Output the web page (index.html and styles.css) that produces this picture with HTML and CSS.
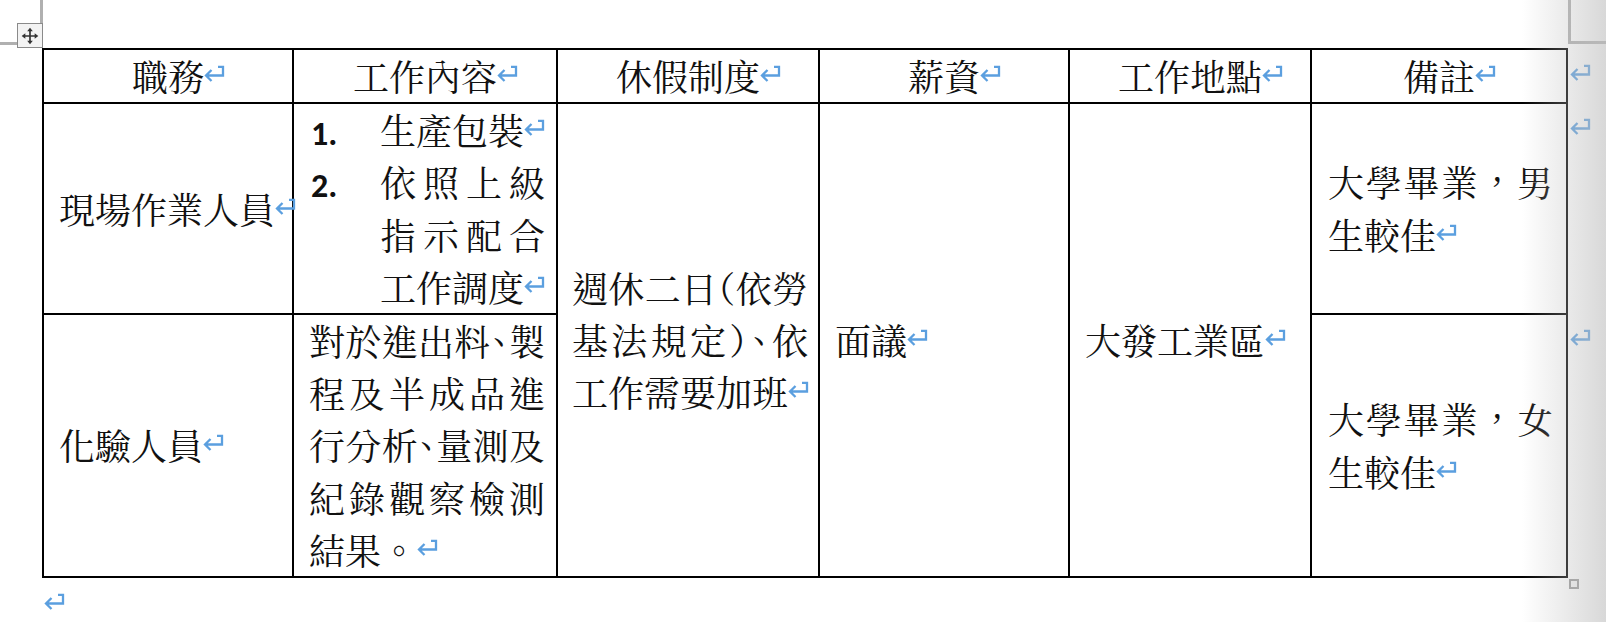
FILE: index.html
```html
<!DOCTYPE html>
<html lang="zh-Hant">
<head>
<meta charset="utf-8">
<title>職務表</title>
<link rel="stylesheet" href="styles.css">
</head>
<body>
<div class="page">
  <div class="crop crop-tl-v"></div>
  <div class="crop crop-tl-h"></div>
  <div class="crop crop-tr-v"></div>
  <div class="crop crop-tr-h"></div>
  <div class="move-handle">
    <svg viewBox="0 0 24 24" class="move-icon">
      <path d="M12 5V19M5 12H19" />
      <path class="head" d="M12 2L8.6 6.4H15.4ZM12 22L8.6 17.6H15.4ZM2 12L6.4 8.6V15.4ZM22 12L17.6 8.6V15.4Z" />
    </svg>
  </div>

  <table class="jobs">
    <colgroup>
      <col class="w1"><col class="w2"><col class="w3"><col class="w4"><col class="w5"><col class="w6"><col class="w7">
    </colgroup>
    <thead>
      <tr>
        <th class="cell">職務<svg class="pm" viewBox="0 0 21 17"><path d="M14 1.8H19V10.5H2M7.5 5L2 10.5L7.5 16"/></svg></th>
        <th class="cell">工作內容<svg class="pm" viewBox="0 0 21 17"><path d="M14 1.8H19V10.5H2M7.5 5L2 10.5L7.5 16"/></svg></th>
        <th class="cell">休假制度<svg class="pm" viewBox="0 0 21 17"><path d="M14 1.8H19V10.5H2M7.5 5L2 10.5L7.5 16"/></svg></th>
        <th class="cell">薪資<svg class="pm" viewBox="0 0 21 17"><path d="M14 1.8H19V10.5H2M7.5 5L2 10.5L7.5 16"/></svg></th>
        <th class="cell">工作地點<svg class="pm" viewBox="0 0 21 17"><path d="M14 1.8H19V10.5H2M7.5 5L2 10.5L7.5 16"/></svg></th>
        <th class="cell">備註<svg class="pm" viewBox="0 0 21 17"><path d="M14 1.8H19V10.5H2M7.5 5L2 10.5L7.5 16"/></svg></th>
        <td class="eor"><svg class="pm" viewBox="0 0 21 17"><path d="M14 1.8H19V10.5H2M7.5 5L2 10.5L7.5 16"/></svg></td>
      </tr>
    </thead>
    <tbody>
      <tr>
        <td class="cell">現場作業人員<svg class="pm" viewBox="0 0 21 17"><path d="M14 1.8H19V10.5H2M7.5 5L2 10.5L7.5 16"/></svg></td>
        <td class="cell">
          <div class="item"><span class="num">1.</span><span class="itext">生產包裝<svg class="pm" viewBox="0 0 21 17"><path d="M14 1.8H19V10.5H2M7.5 5L2 10.5L7.5 16"/></svg></span></div>
          <div class="item"><span class="num">2.</span><span class="itext">依照上級指示配合工作調度<svg class="pm" viewBox="0 0 21 17"><path d="M14 1.8H19V10.5H2M7.5 5L2 10.5L7.5 16"/></svg></span></div>
        </td>
        <td class="cell wide" rowspan="2">週休二日<span class="halt">（</span>依勞基法規定<span class="halt">）、</span>依工作需要加班<svg class="pm" viewBox="0 0 21 17"><path d="M14 1.8H19V10.5H2M7.5 5L2 10.5L7.5 16"/></svg></td>
        <td class="cell" rowspan="2">面議<svg class="pm" viewBox="0 0 21 17"><path d="M14 1.8H19V10.5H2M7.5 5L2 10.5L7.5 16"/></svg></td>
        <td class="cell" rowspan="2">大發工業區<svg class="pm" viewBox="0 0 21 17"><path d="M14 1.8H19V10.5H2M7.5 5L2 10.5L7.5 16"/></svg></td>
        <td class="cell note">大學畢業，男生較佳<svg class="pm" viewBox="0 0 21 17"><path d="M14 1.8H19V10.5H2M7.5 5L2 10.5L7.5 16"/></svg></td>
        <td class="eor"><svg class="pm" viewBox="0 0 21 17"><path d="M14 1.8H19V10.5H2M7.5 5L2 10.5L7.5 16"/></svg></td>
      </tr>
      <tr>
        <td class="cell">化驗人員<svg class="pm" viewBox="0 0 21 17"><path d="M14 1.8H19V10.5H2M7.5 5L2 10.5L7.5 16"/></svg></td>
        <td class="cell just">對於進出料<span class="halt">、</span>製程及半成品進行分析<span class="halt">、</span>量測及紀錄觀察檢測結果。<svg class="pm" viewBox="0 0 21 17"><path d="M14 1.8H19V10.5H2M7.5 5L2 10.5L7.5 16"/></svg></td>
        <td class="cell note">大學畢業，女生較佳<svg class="pm" viewBox="0 0 21 17"><path d="M14 1.8H19V10.5H2M7.5 5L2 10.5L7.5 16"/></svg></td>
        <td class="eor"><svg class="pm" viewBox="0 0 21 17"><path d="M14 1.8H19V10.5H2M7.5 5L2 10.5L7.5 16"/></svg></td>
      </tr>
    </tbody>
  </table>
  <p class="after"><svg class="pm" viewBox="0 0 21 17"><path d="M14 1.8H19V10.5H2M7.5 5L2 10.5L7.5 16"/></svg></p>

  <div class="resize-handle"></div>
  <div class="shade"></div>
</div>
</body>
</html>
```

FILE: styles.css
```css
* { box-sizing: border-box; }

html, body {
  margin: 0;
  padding: 0;
  background: #ffffff;
}

body {
  width: 1606px;
  height: 622px;
  overflow: hidden;
  font-family: "Noto Serif CJK TC", "Noto Sans CJK TC", sans-serif;
  font-size: 36px;
  color: #111111;
  text-spacing-trim: space-all;
}

.page {
  position: relative;
  width: 1606px;
  height: 622px;
  padding: 48px 0 0 42px;
}

/* page corner marks */
.crop {
  position: absolute;
  background: #b0b0b0;
}
.crop-tl-v { left: 40px; top: 0; width: 3px; height: 24px; }
.crop-tl-h { left: 0; top: 42px; width: 17px; height: 3px; }
.crop-tr-v { left: 1568px; top: 0; width: 3px; height: 44px; }
.crop-tr-h { left: 1568px; top: 41px; width: 38px; height: 3px; }

.move-handle {
  position: absolute;
  left: 17px;
  top: 23px;
  width: 26px;
  height: 25px;
  border: 1.5px solid #8a8a8a;
  background: #f3f3f3;
  display: flex;
  align-items: center;
  justify-content: center;
}
.move-icon {
  width: 20px;
  height: 20px;
  fill: none;
  stroke: #333333;
  stroke-width: 2;
}
.move-icon .head {
  fill: #333333;
  stroke: none;
}

/* table */
.jobs {
  border-collapse: collapse;
  table-layout: fixed;
  width: 1561px;
}
.w1 { width: 250px; }
.w2 { width: 264px; }
.w3 { width: 262px; }
.w4 { width: 250px; }
.w5 { width: 242px; }
.w6 { width: 256px; }
.w7 { width: 37px; }

.cell {
  border: 2px solid #000000;
  padding: 0 11px 0 15px;
  line-height: 52.2px;
  vertical-align: middle;
  text-align: left;
  font-weight: normal;
}
th.cell {
  text-align: center;
  padding: 0 13px;
}
.cell.wide {
  padding: 0 10px 0 14px;
  text-align: justify;
}
.cell.note {
  padding: 0 13px 0 16px;
  text-align: justify;
}
.cell.just { text-align: justify; }

.eor {
  border: none;
  padding: 0 0 0 2px;
  line-height: 52.2px;
  vertical-align: top;
}

.item {
  display: flex;
  align-items: baseline;
  line-height: 52.2px;
}
.num {
  flex: 0 0 71px;
  font-family: "Carlito", "Liberation Sans", sans-serif;
  font-weight: bold;
  font-size: 34px;
  line-height: 40px;
  padding-left: 2px;
}
.itext {
  flex: 1 1 auto;
  min-width: 0;
  text-align: justify;
}

.halt { font-feature-settings: "halt" 1; }

/* paragraph marks */
.pm {
  display: inline-block;
  width: 21px;
  height: 17px;
  margin-right: -21px;
  vertical-align: 9px;
  fill: none;
  stroke: #5b9fdf;
  stroke-width: 2.3;
}

.after {
  margin: 0;
  padding-left: 2px;
  line-height: 52.2px;
}

.resize-handle {
  position: absolute;
  left: 1569px;
  top: 579px;
  width: 10px;
  height: 10px;
  border: 2px solid #9a9a9a;
  background: #f6f6f6;
}

.shade {
  position: absolute;
  top: 0;
  right: 0;
  width: 84px;
  height: 100%;
  pointer-events: none;
  background: linear-gradient(to right, rgba(190, 190, 190, 0), rgba(190, 190, 190, 0.6));
}
```
